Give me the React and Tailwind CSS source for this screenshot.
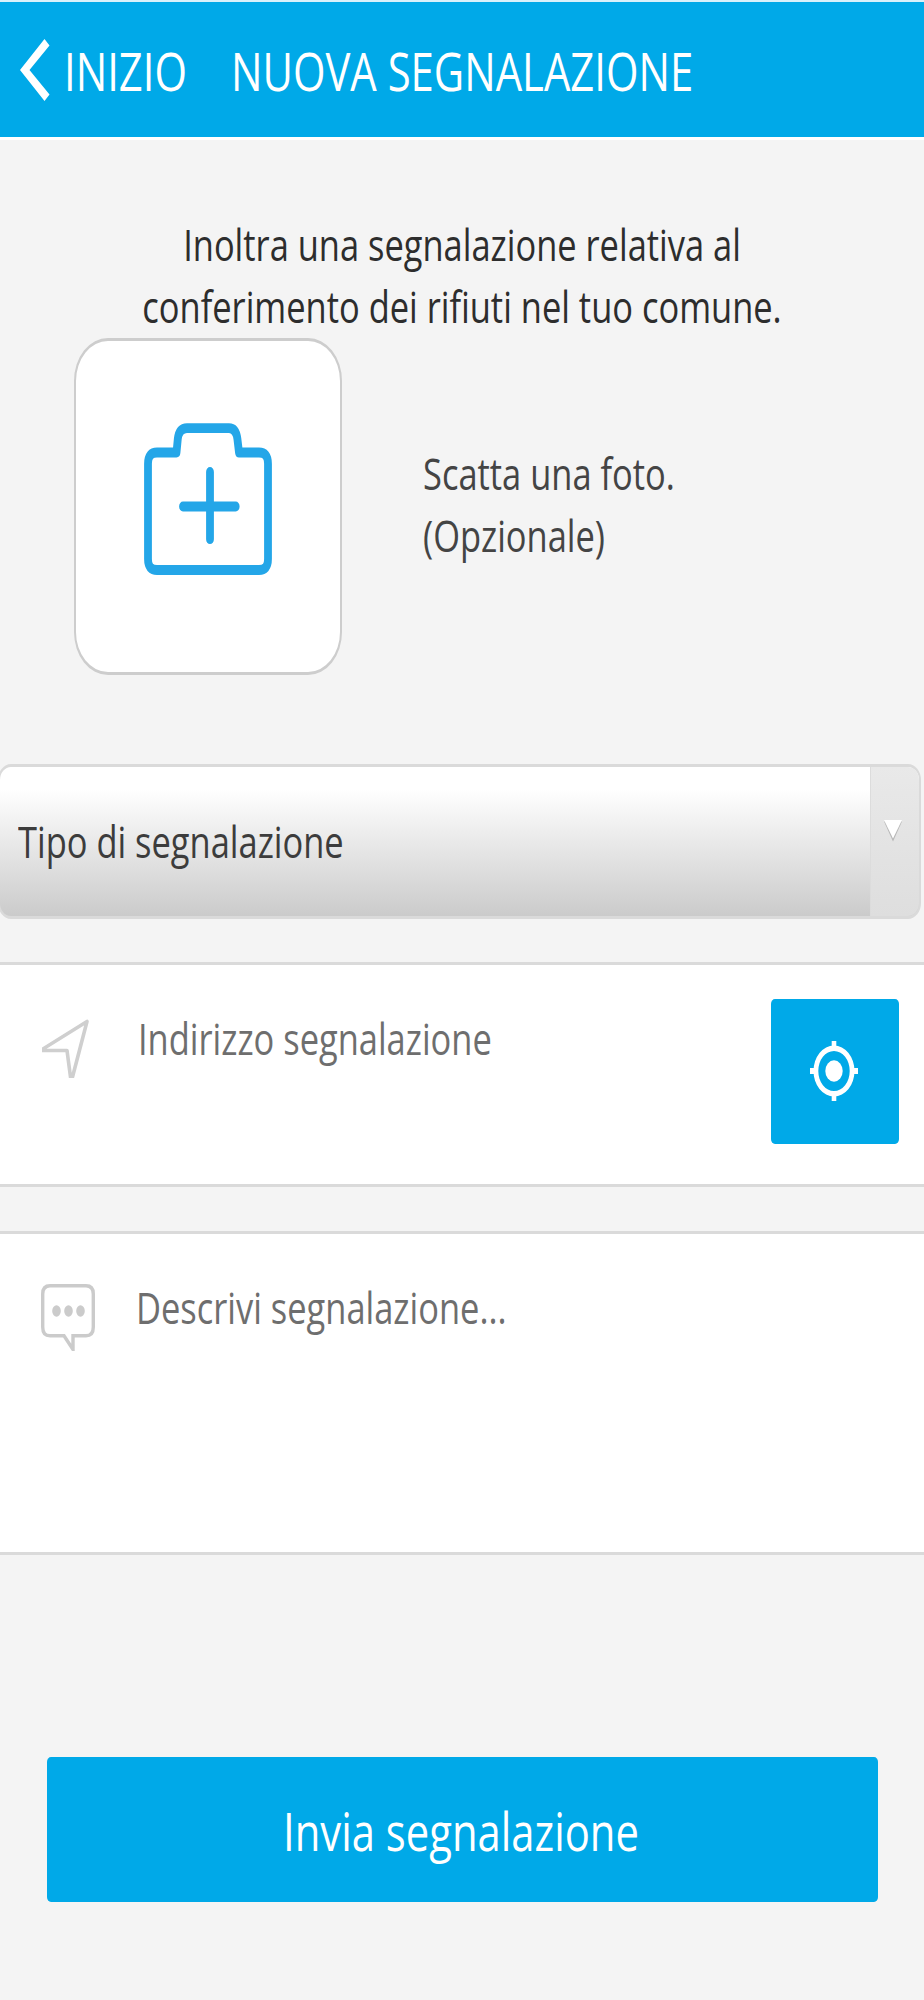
import { clsx } from 'clsx'

// Tall rendering of Open Sans, one line at a time
function Line({ className, children }) {
  return (
    <span className={clsx('block whitespace-nowrap scale-y-[1.25]', className)}>{children}</span>
  )
}

function CameraIcon() {
  return (
    <svg width="128" height="152" viewBox="0 0 128 119.5" preserveAspectRatio="none" fill="none" stroke="#24a6e8" strokeWidth="7.8" strokeLinecap="round" strokeLinejoin="round">
      <path d="M32.5 23.2 L33.8 12.5 Q35 4 43 4 H85 Q92 4 93.4 12.5 L95 23.2 H115 Q124 23.2 124 32 V107 Q124 115.6 115 115.6 H13 Q4 115.6 4 107 V32 Q4 23.2 13 23.2 Z" />
      <path d="M39 65.6 H91.7 M66 38.5 V91.3" />
    </svg>
  )
}

function ArrowIcon() {
  return (
    <svg className="mt-[54px] ml-[42px] shrink-0" width="47" height="59" viewBox="0 0 47 59" fill="none" stroke="#cfcfcf" strokeWidth="3.6">
      <path d="M0 30.5 L45 2.5 L30.5 58 H28.5 L25 31.5 H0" strokeLinejoin="round" />
    </svg>
  )
}

function CommentIcon() {
  return (
    <svg className="mt-[49px] ml-[41px] shrink-0" width="54" height="68" viewBox="0 0 54 68" fill="none" stroke="#cbcbcb" strokeWidth="3.4">
      <path d="M9 2.8 H45 Q52.3 2.8 52.3 11 V44 Q52.3 52.8 45 52.8 H32 V66.5 L23 52.8 H9 Q1.7 52.8 1.7 44 V11 Q1.7 2.8 9 2.8 Z" />
      <g fill="#cbcbcb" stroke="none">
        <ellipse cx="15.5" cy="28" rx="4.3" ry="5.7" />
        <ellipse cx="27.5" cy="28" rx="4.3" ry="5.7" />
        <ellipse cx="39.5" cy="28" rx="4.3" ry="5.7" />
      </g>
    </svg>
  )
}

function TargetIcon() {
  return (
    <svg width="48" height="60" viewBox="0 0 48 60" fill="white">
      <path d="M21.7 0 H26.3 V8 H21.7 Z M21.7 52 H26.3 V60 H21.7 Z M0 27 H6 V33 H0 Z M42 27 H48 V33 H42 Z" />
      <path fillRule="evenodd" d="M24 4.5 A20.5 25.5 0 1 1 24 55.5 A20.5 25.5 0 1 1 24 4.5 Z M24 10 A15.7 20 0 1 0 24 50 A15.7 20 0 1 0 24 10 Z" />
      <ellipse cx="24" cy="30" rx="8.7" ry="10.7" />
    </svg>
  )
}

function Header() {
  return (
    <header className="flex h-[140px] border-t-2 border-b-[3px] border-t-[#d9f1fb] border-b-white bg-[#00a9e8] text-white">
      <svg className="mt-[37px] ml-[20px]" width="30" height="63" viewBox="0 0 30 63" fill="white">
        <path d="M24.5 0 L29.5 6.5 L9.5 31 L29.5 55.5 L24.5 62 L0 31 Z" />
      </svg>
      <Line className="ml-[14px] w-[167px] text-[41.8px] leading-[138px]">INIZIO</Line>
      <Line className="text-[41.8px] leading-[138px]">NUOVA SEGNALAZIONE</Line>
    </header>
  )
}

export default function App() {
  return (
    <div className="h-[2000px] w-[924px] overflow-hidden bg-[#f4f4f4] font-['Open_Sans',sans-serif] text-[34.45px] text-[#444]">
      <Header />

      <div className="mt-[74px] text-center text-[#2d2d2d]">
        <Line className="leading-[62px]">Inoltra una segnalazione relativa al</Line>
        <Line className="leading-[62px]">conferimento dei rifiuti nel tuo comune.</Line>
      </div>

      <div className="flex">
        <div className="ml-[74px] flex h-[337px] w-[268px] justify-center rounded-[34px/43px] border-x-2 border-y-[3px] border-[#cdcdcd] bg-white pt-[82px]">
          <CameraIcon />
        </div>
        <div className="mt-[105px] ml-[81px]">
          <Line className="leading-[62px]">Scatta una foto.</Line>
          <Line className="leading-[62px]">(Opzionale)</Line>
        </div>
      </div>

      <div className="mt-[89px] -ml-[2px] flex h-[155px] w-[923px] overflow-hidden rounded-[13px/16px] border-x-2 border-y-[3px] border-[#dadada] bg-linear-to-b from-white from-15% to-[#cbcbcb]">
        <Line className="flex-1 pl-[18px] text-[#3c3c3c] leading-[150px]">Tipo di segnalazione</Line>
        <div className="w-[49px] border-l border-[#dcdcdc] bg-linear-to-b from-[#e9e9e9] to-[#dedede] pt-[52px] pl-[12px]">
          <svg width="20" height="24" viewBox="0 0 20 24">
            <path d="M1 2.5 H19 L10 22.5 Z" fill="#b8b8b8" />
            <path d="M1 1 H19 L10 19.5 Z" fill="white" />
          </svg>
        </div>
      </div>

      <div className="mt-[43px] flex h-[225px] border-y-[3px] border-[#dadada] bg-white text-[#6e6e6e]">
        <ArrowIcon />
        <Line className="mt-[43px] ml-[49px] flex-1 self-start leading-[62px]">Indirizzo segnalazione</Line>
        <button className="mt-[34px] mr-[25px] flex h-[145px] w-[128px] items-center justify-center rounded-[4px/5px] bg-[#00a9e8] pr-[2px] pb-[2px]">
          <TargetIcon />
        </button>
      </div>

      <div className="mt-[44px] flex h-[324px] border-y-[3px] border-[#dadada] bg-white text-[#6e6e6e]">
        <CommentIcon />
        <Line className="mt-[43px] ml-[41px] self-start leading-[62px]">Descrivi segnalazione...</Line>
      </div>

      <button className="mt-[202px] ml-[47px] block h-[145px] w-[831px] rounded-[4px/5px] bg-[#00a9e8] pt-[3px] pr-[3px] text-[41.8px] text-white">
        <Line className="leading-[142px]">Invia segnalazione</Line>
      </button>
    </div>
  )
}
